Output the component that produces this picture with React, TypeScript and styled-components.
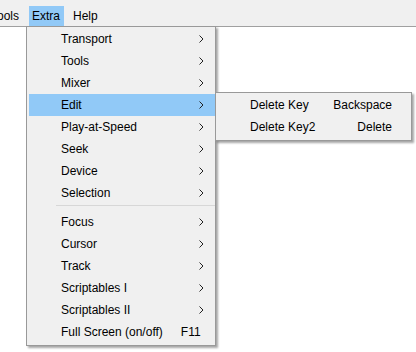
import * as React from "react";
import styled, { createGlobalStyle } from "styled-components";

const GlobalStyle = createGlobalStyle`
html, body {
  margin: 0;
  padding: 0;
  background: #fff;
}
body {
  font-family: "Liberation Sans", Arial, sans-serif;
  font-size: 12px;
  color: #000;
}
`;

const Screen = styled.div`
position: relative;
width: 416px;
height: 352px;
overflow: hidden;
background: #fff;
`;

const MenuBar = styled.div`
display: flex;
align-items: flex-end;
gap: 6px;
height: 26px;
background: #f0f0f0;
border-bottom: 1px solid #a0a0a0;
overflow: hidden;
`;

const BarItem = styled.div<{ $active?: boolean; $clip?: number }>`
height: 20px;
line-height: 20px;
padding: 0 4px 0 3px;
margin-left: ${p => (p.$clip ? -p.$clip : 0)}px;
background: ${p => (p.$active ? "#91c9f7" : "transparent")};
white-space: nowrap;
flex-shrink: 0;
`;

const Popup = styled.div<{ $left: number; $top: number; $width: number }>`
position: absolute;
left: ${p => p.$left}px;
top: ${p => p.$top}px;
width: ${p => p.$width}px;
box-sizing: border-box;
padding: 1px 0 2px 2px;
background: #f0f0f0;
border: 1px solid #999;
box-shadow: 2px 2px 2px rgba(0, 0, 0, 0.35);
display: flex;
flex-direction: column;
`;

const Row = styled.div<{ $active?: boolean; $tail: number }>`
display: grid;
grid-template-columns: 32px 1fr auto ${p => p.$tail}px;
align-items: center;
height: 22px;
line-height: 22px;
background: ${p => (p.$active ? "#91c9f7" : "transparent")};
white-space: nowrap;
`;

const Label = styled.span`
grid-column: 2;
`;

const Shortcut = styled.span`
grid-column: 3;
text-align: right;
padding-left: 18px;
`;

const Arrow = styled.span`
grid-column: 4;
display: flex;
align-items: center;
justify-content: flex-start;
`;

const Separator = styled.div`
height: 7px;
display: flex;
align-items: flex-start;
padding-left: 27px;
&::after {
  content: "";
  flex: 1;
  height: 1px;
  margin-top: 1px;
  background: #d7d7d7;
}
`;

const Chevron = () => (
    <svg width="5" height="8" viewBox="0 0 5 8">
        <polyline points="0.5,0.5 4,4 0.5,7.5" fill="none" stroke="#222" strokeWidth="1" />
    </svg>
);

type Item = { label?: string; shortcut?: string; sub?: boolean; sep?: boolean; active?: boolean };

const extraItems: Item[] = [
    { label: "Transport", sub: true },
    { label: "Tools", sub: true },
    { label: "Mixer", sub: true },
    { label: "Edit", sub: true, active: true },
    { label: "Play-at-Speed", sub: true },
    { label: "Seek", sub: true },
    { label: "Device", sub: true },
    { label: "Selection", sub: true },
    { sep: true },
    { label: "Focus", sub: true },
    { label: "Cursor", sub: true },
    { label: "Track", sub: true },
    { label: "Scriptables I", sub: true },
    { label: "Scriptables II", sub: true },
    { label: "Full Screen (on/off)", shortcut: "F11" },
];

const editItems: Item[] = [
    { label: "Delete Key", shortcut: "Backspace" },
    { label: "Delete Key2", shortcut: "Delete" },
];

const MenuList = ({ items, tail }: { items: Item[]; tail: number }) => (
    <>
        {items.map((it, i) =>
            it.sep ? (
                <Separator key={i} />
            ) : (
                <Row key={i} $active={it.active} $tail={tail}>
                    <Label>{it.label}</Label>
                    <Shortcut>{it.shortcut}</Shortcut>
                    <Arrow>{it.sub && <Chevron />}</Arrow>
                </Row>
            )
        )}
    </>
);

const App = () => (
    <Screen>
        <GlobalStyle />
        <MenuBar>
            <BarItem $clip={12}>Tools</BarItem>
            <BarItem $active>Extra</BarItem>
            <BarItem>Help</BarItem>
        </MenuBar>
        <Popup $left={26} $top={26} $width={190}>
            <MenuList items={extraItems} tail={16} />
        </Popup>
        <Popup $left={215} $top={92} $width={197}>
            <MenuList items={editItems} tail={19} />
        </Popup>
    </Screen>
);

export default App;
